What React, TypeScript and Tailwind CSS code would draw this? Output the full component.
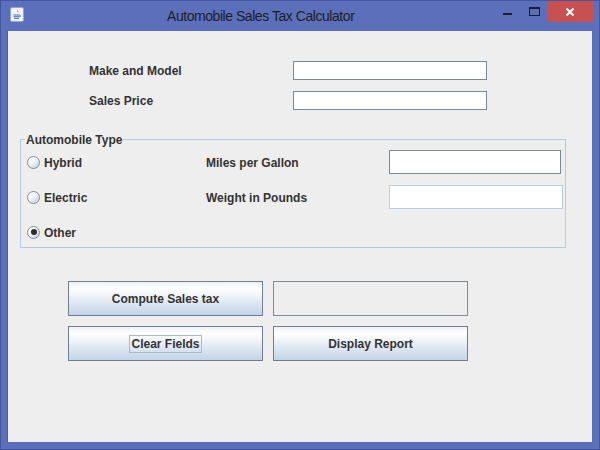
import React from "react";

const labelCls = "text-[12px] font-bold leading-[14px] text-[#333333]";

function JavaIcon() {
  return (
    <svg width="14" height="15" viewBox="0 0 14 15">
      <rect x="0.5" y="0.5" width="13" height="14" rx="1.5" fill="#dfe5ec" stroke="#9aa8b8" />
      <rect x="1.5" y="1.5" width="11" height="12" rx="1" fill="#f3f6f9" />
      <path d="M7.5 2.5c-1.5 1.2 0.8 1.8-0.4 3.2 1.6-0.8 0.2-1.8 0.4-3.2z" fill="#e2661f" />
      <path d="M8.8 3.8c-1.1 0.8 0.3 1.3-0.6 2.2 1.2-0.6 0.5-1.3 0.6-2.2z" fill="#ef8a2c" />
      <path d="M3.5 8h6M3.5 9.7h6M4 11.4h5" stroke="#3d6fa8" strokeWidth="1" />
      <path d="M9.5 8.2c1.4 0 1.4 1.8 0 1.8" stroke="#3d6fa8" fill="none" />
    </svg>
  );
}

function Field({ w, border = "border-[#7b8896]" }: { w: string; border?: string }) {
  return <div className={`h-full bg-white border ${border} ${w}`} />;
}

function Radio({ checked, label }: { checked?: boolean; label: string }) {
  return (
    <div className="flex items-center w-[185px] pl-[6px]">
      <span className="flex h-[13px] w-[13px] items-center justify-center rounded-full border border-[#7e8c9b] bg-linear-to-br from-white via-[#eef1f5] to-[#c3cdd8]">
        {checked ? <span className="h-[6px] w-[6px] rounded-full bg-[#2b2b2b]" /> : null}
      </span>
      <span className={`${labelCls} ml-[4px] pt-[1px]`}>{label}</span>
    </div>
  );
}

function SwingButton({ children }: { children: React.ReactNode }) {
  return (
    <button className="flex h-[35px] w-[195px] items-center justify-center border border-[#707d8b] bg-linear-to-b from-[#edf2f8] via-white via-20% to-[#c2d4e8]">
      {children}
    </button>
  );
}

export default function App() {
  return (
    <div className="flex h-[450px] w-[600px] flex-col border border-[#4456a0] bg-[#5b6fba]" style={{ fontFamily: '"Liberation Sans", Arial, sans-serif' }}>
      {/* title bar */}
      <div className="flex h-[30px] items-start">
        <div className="ml-[9px] mt-[6px]">
          <JavaIcon />
        </div>
        <div className="ml-[143px] mt-[7px] text-[14px] leading-[17px] tracking-[-0.45px] text-[#1e1e1e]">
          Automobile Sales Tax Calculator
        </div>
        <div className="ml-auto flex items-start">
          <div className="mt-[12px] h-[2px] w-[9px] bg-[#1f1f1f]" />
          <div className="ml-[17px] mt-[6px] h-[9px] w-[11px] border border-t-2 border-[#1f1f1f]" />
          <div className="ml-[7px] flex h-[21px] w-[46px] items-center justify-center bg-[#c75050]">
            <svg width="10" height="10" viewBox="0 0 10 10">
              <path d="M1.5 1.5l7 7M8.5 1.5l-7 7" stroke="white" strokeWidth="2" />
            </svg>
          </div>
          <div className="w-[6px]" />
        </div>
      </div>

      {/* content */}
      <div className="ml-[6px] h-[411px] w-[585px] border-l border-[#4a5ca6] bg-[#eeeeee] pt-[30px]">
        <div className="flex h-[19px] items-center">
          <span className={`${labelCls} w-[285px] pl-[81px] pt-[1px]`}>Make and Model</span>
          <Field w="w-[194px]" />
        </div>
        <div className="mt-[11px] flex h-[19px] items-center">
          <span className={`${labelCls} w-[285px] pl-[81px] pt-[1px]`}>Sales Price</span>
          <Field w="w-[194px]" />
        </div>

        {/* group */}
        <div className="ml-[12px] mt-[29px] w-[546px] border border-[#b6cbe1] pb-[3px]">
          <span className={`${labelCls} -mt-[7px] ml-[4px] block w-fit bg-[#eeeeee] px-[1px]`}>Automobile Type</span>
          <div className="mt-[3px] flex flex-col gap-[11px]">
            <div className="flex h-[24px] items-center">
              <Radio label="Hybrid" />
              <span className={`${labelCls} w-[183px] pt-[1px]`}>Miles per Gallon</span>
              <Field w="w-[172px]" border="border-[#7b8896]" />
            </div>
            <div className="flex h-[24px] items-center">
              <Radio label="Electric" />
              <span className={`${labelCls} w-[183px] pt-[1px]`}>Weight in Pounds</span>
              <Field w="w-[174px]" border="border-[#b9cde3]" />
            </div>
            <div className="flex h-[24px] items-center">
              <Radio checked label="Other" />
            </div>
          </div>
        </div>

        {/* buttons */}
        <div className="ml-[60px] mt-[33px] flex flex-col gap-[10px]">
          <div className="flex gap-[10px]">
            <SwingButton>
              <span className={labelCls}>Compute Sales tax</span>
            </SwingButton>
            <div className="h-[35px] w-[195px] border border-[#7f8a96] bg-[#eeeeee]" />
          </div>
          <div className="flex gap-[10px]">
            <SwingButton>
              <span className={`${labelCls} border border-[#a6bbd3] px-[1px] py-[1px]`}>Clear Fields</span>
            </SwingButton>
            <SwingButton>
              <span className={labelCls}>Display Report</span>
            </SwingButton>
          </div>
        </div>
      </div>
    </div>
  );
}
